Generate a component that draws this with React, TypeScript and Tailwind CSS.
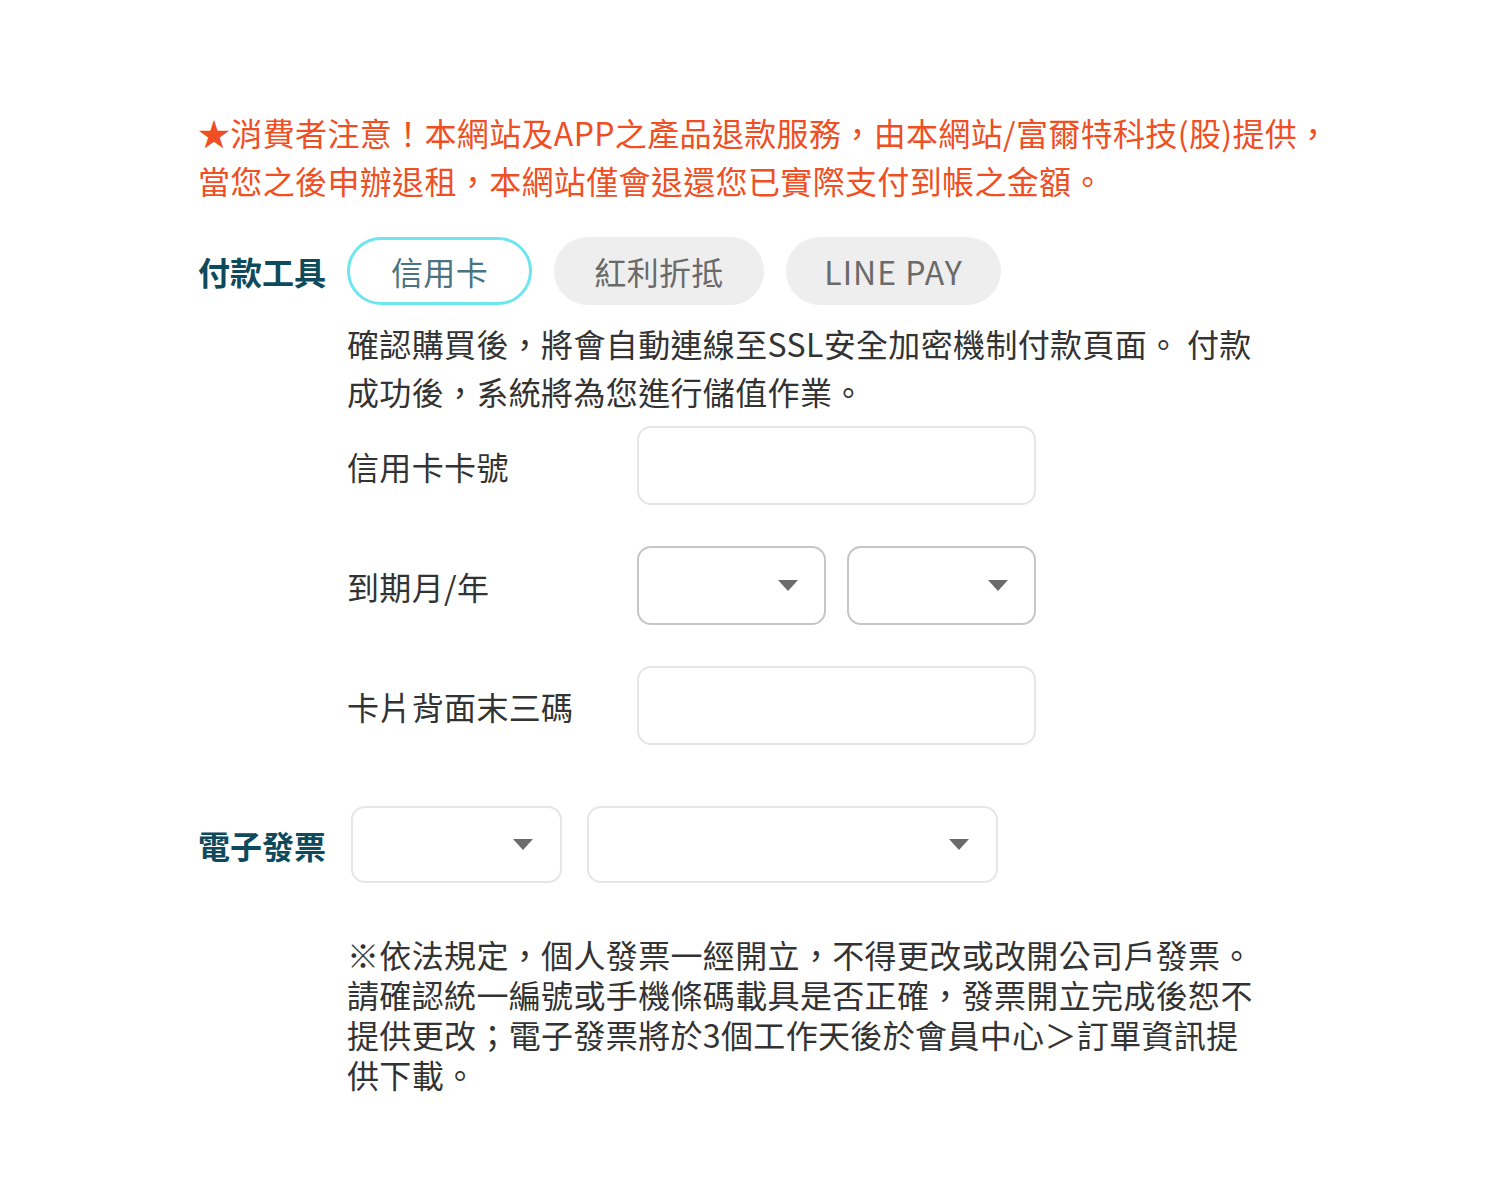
import React from "react";

const font = { fontFamily: '"Noto Sans CJK TC", "Noto Sans", sans-serif' };

function Arrow() {
  return (
    <svg width="20" height="11" viewBox="0 0 20 11" className="block">
      <path d="M0 0 L20 0 L10 11 Z" fill="#6b6b6b" />
    </svg>
  );
}

function SelectBox({ w, h, border, arrowRight }: { w: string; h: string; border: string; arrowRight: string }) {
  return (
    <div className={`${w} ${h} ${border} relative rounded-[14px] border-2 bg-white flex items-center justify-end ${arrowRight}`}>
      <Arrow />
    </div>
  );
}

export default function App() {
  return (
    <div className="min-h-[1200px] w-[1500px] bg-white tracking-[0.35px]" style={font}>
      <div className="pl-[198px] pt-[108px]">
        <p className="text-[32px] leading-[48px] text-[#f04e23] w-[1160px]">
          ★消費者注意！本網站及APP之產品退款服務，由本網站/富爾特科技(股)提供，
          <br />
          當您之後申辦退租，本網站僅會退還您已實際支付到帳之金額。
        </p>

        <div className="mt-[33px] flex items-center">
          <div className="w-[149px] text-[32px] font-bold text-[#0e4a5c] leading-[48px] tracking-normal">付款工具</div>
          <div className="flex gap-[22px]">
            <div className="w-[185px] h-[68px] rounded-full border-[3px] border-[#6de6ee] flex items-center justify-center text-[32px] text-[#4a7480]">
              信用卡
            </div>
            <div className="w-[210px] h-[68px] rounded-full bg-[#eeeeee] flex items-center justify-center text-[32px] text-[#6a6a6a]">
              紅利折抵
            </div>
            <div className="w-[215px] h-[68px] rounded-full bg-[#eeeeee] flex items-center justify-center text-[32px] text-[#6a6a6a] tracking-[1px]">
              LINE PAY
            </div>
          </div>
        </div>

        <div className="ml-[149px] mt-[14px] w-[930px] text-[32px] leading-[48px] text-[#333333]">
          確認購買後，將會自動連線至SSL安全加密機制付款頁面。 付款
          <br />
          成功後，系統將為您進行儲值作業。
        </div>

        <div className="ml-[149px] mt-[11px] flex flex-col gap-[41px]">
          <div className="flex items-center">
            <div className="w-[290px] text-[32px] text-[#333333] leading-[48px]">信用卡卡號</div>
            <div className="w-[399px] h-[79px] rounded-[14px] border-2 border-[#e6e6e6] bg-white"></div>
          </div>
          <div className="flex items-center">
            <div className="w-[290px] text-[32px] text-[#333333] leading-[48px]">到期月/年</div>
            <div className="flex gap-[21px]">
              <SelectBox w="w-[189px]" h="h-[79px]" border="border-[#c6c6c6]" arrowRight="pr-[26px]" />
              <SelectBox w="w-[189px]" h="h-[79px]" border="border-[#c6c6c6]" arrowRight="pr-[26px]" />
            </div>
          </div>
          <div className="flex items-center">
            <div className="w-[290px] text-[32px] text-[#333333] leading-[48px]">卡片背面末三碼</div>
            <div className="w-[399px] h-[79px] rounded-[14px] border-2 border-[#e6e6e6] bg-white"></div>
          </div>
        </div>

        <div className="mt-[61px] flex items-center">
          <div className="w-[153px] text-[32px] font-bold text-[#0e4a5c] leading-[48px] tracking-normal">電子發票</div>
          <div className="flex gap-[25px]">
            <SelectBox w="w-[211px]" h="h-[77px]" border="border-[#e6e6e6]" arrowRight="pr-[27px]" />
            <SelectBox w="w-[411px]" h="h-[77px]" border="border-[#e6e6e6]" arrowRight="pr-[27px]" />
          </div>
        </div>

        <div className="ml-[149px] mt-[51px] w-[930px] text-[32px] leading-[40px] text-[#333333]">
          ※依法規定，個人發票一經開立，不得更改或改開公司戶發票。
          <br />
          請確認統一編號或手機條碼載具是否正確，發票開立完成後恕不
          <br />
          提供更改；電子發票將於3個工作天後於會員中心＞訂單資訊提
          <br />
          供下載。
        </div>
      </div>
    </div>
  );
}
